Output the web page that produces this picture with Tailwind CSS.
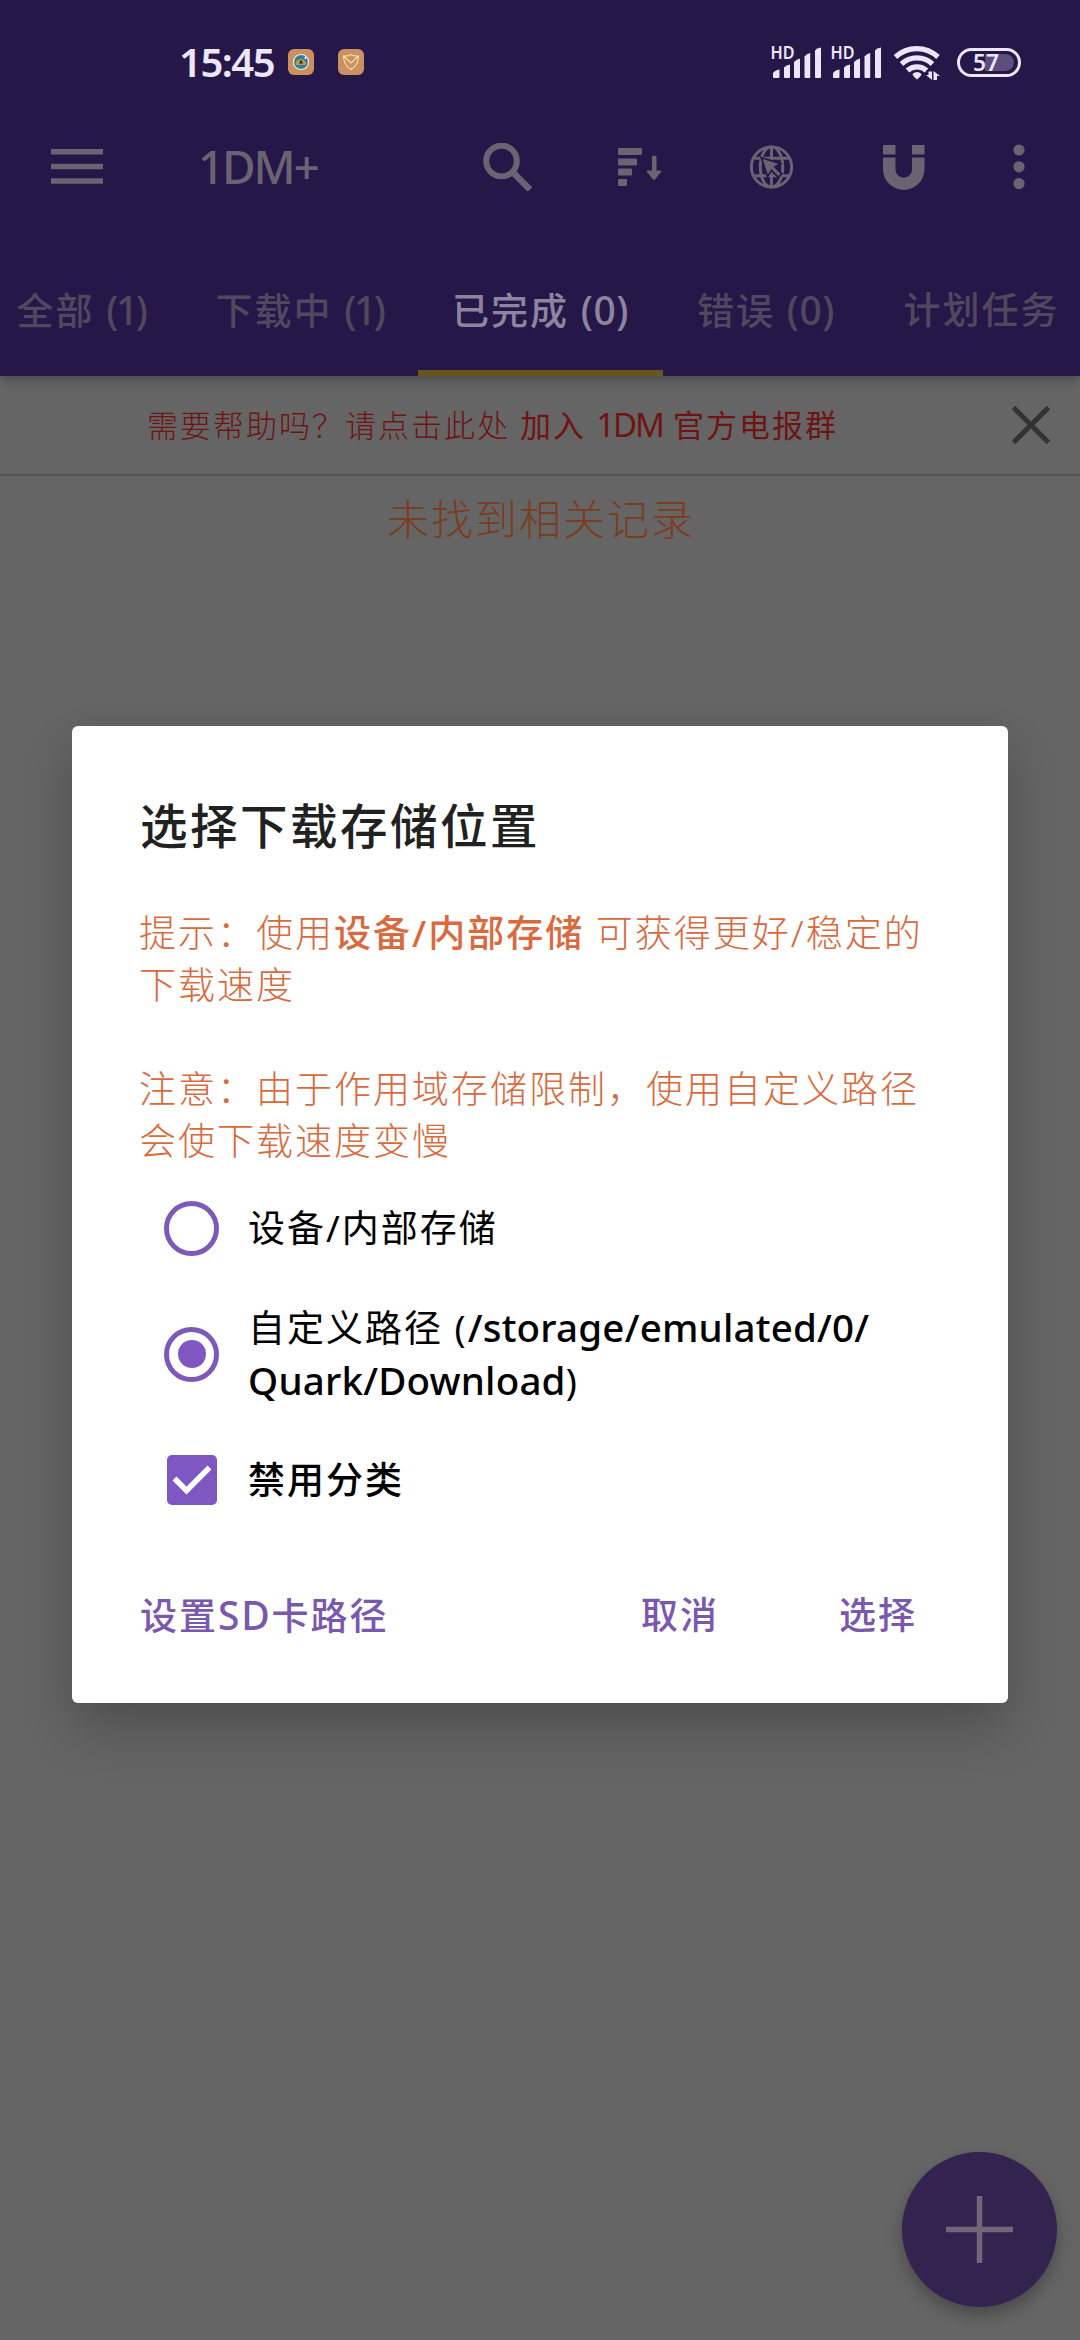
<!DOCTYPE html>
<html lang="zh-CN">
<head>
<meta charset="utf-8">
<title>1DM+</title>
<script src="https://cdn.jsdelivr.net/npm/@tailwindcss/browser@4"></script>
</head>
<body class="relative h-[2340px] w-[1080px] overflow-hidden bg-[#656565] font-['Noto_Sans','Noto_Sans_CJK_SC',sans-serif]">

<header class="relative flex h-[376px] flex-col bg-[#251748] shadow-[0_4px_10px_rgba(0,0,0,0.25)]">
  <!-- status bar -->
  <div class="flex h-[100px] items-center pt-[24px] pl-[179px] text-[#ede5fa]">
    <span class="w-[109px] text-[40px] leading-[50px] font-semibold tracking-[-1.5px]">15:45</span>
    <svg class="h-[26px] w-[26px]" viewBox="0 0 26 26">
      <rect width="26" height="26" rx="6" fill="#cc8f5e"/>
      <circle cx="13" cy="13" r="7.5" fill="#2f7f9c" stroke="#e8eee6" stroke-width="1.2"/>
      <path d="M8.500 16a3 3 0 0 1 1.500-5 4 4 0 0 1 6.500 1 2.500 2.500 0 0 1 1 4z" fill="#c19a45"/>
      <path d="M13 10.500l2 4h-4z" fill="#2a2a26"/><circle cx="17.500" cy="9" r="1" fill="#fff"/>
    </svg>
    <svg class="ml-[24px] h-[26px] w-[26px]" viewBox="0 0 26 26">
      <rect width="26" height="26" rx="6" fill="#cb9064"/>
      <path d="M13 5.500c2.500 1.500 5 1.800 7.500 1.500 0 6-2.500 10.500-7.500 13.500C8 17.500 5.500 13 5.500 7c2.500.3 5 0 7.500-1.500zM6 7.500l7 6.500 7-6.500" fill="none" stroke="#fbe3a6" stroke-width="1.100"/>
    </svg>
    <svg class="ml-[401px] h-[44px] w-[262px]" viewBox="765 40 262 44" fill="currentColor">
      <g font-family="Noto Sans" font-size="17.500" font-weight="600">
        <text x="770.500" y="58.500" textLength="24" lengthAdjust="spacingAndGlyphs">HD</text>
        <text x="830.500" y="58.500" textLength="24" lengthAdjust="spacingAndGlyphs">HD</text>
      </g>
      <g id="bars">
        <path d="M773 77v-3c0-2 2-3.500 6.500-4.500V77q0 1-1 1h-4.500q-1 0-1-1z"/>
        <path d="M784 77V67.500q2.500-2.500 6-3V77q0 1-1 1h-4q-1 0-1-1z"/>
        <path d="M794 77V62q2.500-3 6-3.500V77q0 1-1 1h-4q-1 0-1-1z"/>
        <path d="M804.500 77V56.500q2-3 5.700-3.500V77q0 1-1 1h-3.700q-1 0-1-1z"/>
        <path d="M815 77V50.500q2-2.500 6-3V77q0 1-1 1h-4q-1 0-1-1z"/>
      </g>
      <use href="#bars" x="60"/>
      <g fill="none" stroke="currentColor" stroke-width="5.200">
        <path d="M895.500 57a31 31 0 0 1 42.500 0"/>
        <path d="M901.500 64a22.500 22.500 0 0 1 31 0"/>
        <path d="M907.500 70.500a14 14 0 0 1 19 0"/>
      </g>
      <path d="M912.500 74q4.500-4.200 9 0 0 1.500-4.500 5.500-4.500-4-4.500-5.500z"/>
      <path d="M928.500 71.500h3.500v8.500l-6-5h2.500zM933.500 80v-9l6.500 5h-3v4z"/>
      <path d="M985 54h20.500a8.500 8.500 0 0 1 0 17H985z" fill="#5d4d7c"/>
      <rect x="958.500" y="49.500" width="61" height="26" rx="13" fill="none" stroke="currentColor" stroke-width="3"/>
      <text x="973" y="71" font-family="Noto Sans" font-size="24" font-weight="600" textLength="26" lengthAdjust="spacingAndGlyphs">57</text>
    </svg>
  </div>

  <!-- toolbar -->
  <div class="flex h-[134px] items-center text-[#6a6371]">
    <svg class="ml-[51px] h-[36px] w-[52px]" viewBox="0 0 52 36" fill="currentColor"><path d="M0 0h52v5.500H0zM0 14.700h52v5.500H0zM0 29.300h52v5.500H0z"/></svg>
    <h1 class="ml-[95px] w-[285px] pb-[2px] text-[46px] leading-[60px] font-medium tracking-[-2.2px]">1DM+</h1>
    <svg class="h-[48px] w-[49px]" viewBox="0 0 49 48" fill="none" stroke="currentColor" stroke-width="6"><circle cx="18.500" cy="18" r="15.300"/><path d="M30 29.500l17 17" stroke-width="6.500"/></svg>
    <svg class="ml-[86px] h-[38px] w-[44px]" viewBox="0 0 44 38" fill="currentColor">
      <rect width="24" height="7" rx="1"/><rect y="10.500" width="19" height="7" rx="1"/><rect y="20.500" width="14" height="7" rx="1"/><rect y="31" width="9" height="7" rx="1"/>
      <path d="M34 9q0-1.500 2.200-1.500T38.500 9v13.500H43q1 .5 0 1.500l-6 7.500q-1 .8-2 0L29 24q-1-1 0-1.500h5z"/>
    </svg>
    <svg class="ml-[87px] h-[46px] w-[45px]" viewBox="0 0 46 46" fill="none" stroke="currentColor" stroke-width="3">
      <circle cx="23" cy="23" r="20.600"/><ellipse cx="23" cy="23" rx="11.500" ry="20.600"/><path d="M23 2.500v41M5.500 14h35M5.500 32h35"/>
      <path d="M12.500 13.500l20 6-6 3.500 7 7-3.500 3.500-7-7-4 6z" fill="currentColor" stroke="#251748" stroke-width="1.800"/>
    </svg>
    <svg class="ml-[89px] h-[45px] w-[42px]" viewBox="0 0 42 45" fill="currentColor"><path d="M0 0h12.500v9.500H0zM29 0h12.500v9.500H29zM0 12.500h12.500v12a8.250 8.250 0 0 0 16.500 0v-12h12.500v11.700a20.750 20.750 0 0 1-41.500 0z"/></svg>
    <svg class="ml-[88px] h-[46px] w-[12px]" viewBox="0 0 12 46" fill="currentColor"><circle cx="6" cy="6" r="5.600"/><circle cx="6" cy="22.800" r="5.600"/><circle cx="6" cy="39.500" r="5.600"/></svg>
  </div>

  <!-- tabs -->
  <nav class="-ml-[19px] flex h-[142px] w-[1120px] text-center text-[37px] leading-[52px] font-medium tracking-[2px] whitespace-nowrap text-[#51475e]">
    <div class="w-[200px] pt-[50px]">全部 <span class="text-[39px] tracking-[-2.5px]">(1)</span></div>
    <div class="w-[237px] pt-[50px]">下载中 <span class="text-[39px] tracking-[-2.5px]">(1)</span></div>
    <div class="w-[245px] border-b-[6px] border-[#685621] pt-[50px] text-[#8d859f]">已完成 <span class="text-[39px] tracking-[0.5px]">(0)</span></div>
    <div class="w-[206px] pt-[50px]">错误 <span class="text-[39px] tracking-[0.5px]">(0)</span></div>
    <div class="w-[225px] pt-[50px]">计划任务</div>
  </nav>
</header>

<!-- help banner -->
<div class="flex h-[100px] items-center border-b-2 border-[#555] text-[31px] leading-[40px] font-light tracking-[2px] whitespace-nowrap text-[#6f1414]">
  <p class="ml-[147px] w-[865px]">需要帮助吗？请点击此处 <span class="font-normal">加入 <i class="text-[33px] tracking-[-2px] not-italic">1DM</i> 官方电报群</span></p>
  <svg class="h-[38px] w-[38px]" viewBox="0 0 38 38" fill="none" stroke="#333" stroke-width="5"><path d="M1.500 1.500l35 35M36.500 1.500l-35 35"/></svg>
</div>
<p class="pt-[17px] pl-[2px] text-center text-[42px] leading-[52px] font-light tracking-[2px] text-[#7b3d22]">未找到相关记录</p>

<!-- add button -->
<button class="absolute top-[2152px] left-[902px] flex h-[155px] w-[155px] items-center justify-center rounded-full bg-[#33234f] shadow-[0_8px_16px_rgba(0,0,0,0.28)]">
  <svg class="h-[67px] w-[67px]" viewBox="0 0 67 67" stroke="#706579" stroke-width="5.500"><path d="M33.500 0v67M0 33.500h67"/></svg>
</button>

<!-- storage location dialog -->
<section class="absolute top-[726px] left-[72px] flex h-[977px] w-[936px] flex-col rounded-[6px] bg-white pt-[70px] shadow-[0_28px_54px_rgba(0,0,0,0.2),0_0_30px_rgba(0,0,0,0.05)]">
  <h2 class="pl-[68px] text-[47.5px] leading-[60px] font-medium tracking-[2.5px] text-[#212121]">选择下载存储位置</h2>
  <p class="mt-[51px] pl-[67px] text-[37px] leading-[52px] font-light tracking-[2px] whitespace-nowrap text-[#da6a3e]">提示：使用<b class="font-medium">设备/内部存储</b> 可获得更好/稳定的<br>下载速度<br><br>注意：由于作用域存储限制，使用自定义路径<br>会使下载速度变慢</p>
  <div class="mt-[9px] flex h-[104px] items-center gap-[29px] pl-[92px] text-[37px] leading-[52px] tracking-[2px] text-black">
    <span class="h-[55px] w-[55px] rounded-full border-[5px] border-[#7c5ab9]"></span>
    <span>设备/内部存储</span>
  </div>
  <div class="mt-[22px] flex h-[104px] items-center gap-[29px] pl-[92px] text-[37px] leading-[52px] tracking-[2px] whitespace-nowrap text-black">
    <span class="flex h-[55px] w-[55px] items-center justify-center rounded-full border-[5px] border-[#7c5ab9]"><span class="h-[28px] w-[28px] rounded-full bg-[#7e57c2]"></span></span>
    <span>自定义路径 (<b class="text-[38.5px] font-medium tracking-[0.2px]">/storage/emulated/0/<br>Quark/Download</b>)</span>
  </div>
  <div class="mt-[22px] flex h-[104px] items-center gap-[31px] pl-[95px] text-[37px] leading-[52px] font-medium tracking-[2px] text-black">
    <svg class="h-[50px] w-[50px]" viewBox="0 0 50 50"><rect width="50" height="50" rx="5" fill="#7e57c2"/><path d="M7.500 23.500l12 12 23-23" fill="none" stroke="#fff" stroke-width="5.500"/></svg>
    <span>禁用分类</span>
  </div>
  <div class="mt-[47px] flex h-[72px] items-center pl-[68px] text-[37px] font-medium tracking-[2px] whitespace-nowrap text-[#7a58ae]">
    <button class="w-[501px] text-left">设置<span class="text-[39px] tracking-[1.8px]">SD</span>卡路径</button>
    <button class="w-[198px] text-left">取消</button>
    <button>选择</button>
  </div>
</section>
</body>
</html>
